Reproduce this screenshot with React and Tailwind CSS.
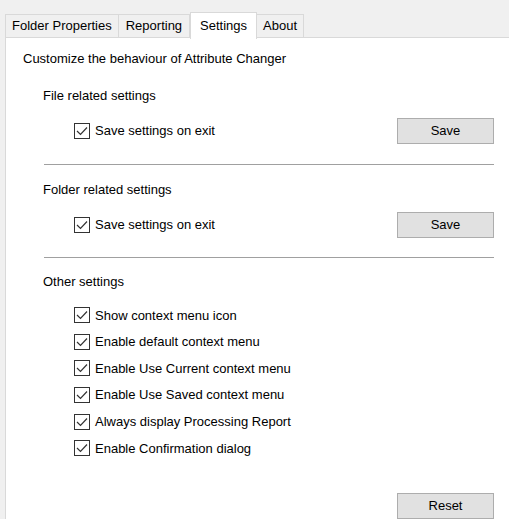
import { useState } from "react";

const tabs = ["Folder Properties", "Reporting", "Settings", "About"];

const otherOptions = [
  "Show context menu icon",
  "Enable default context menu",
  "Enable Use Current context menu",
  "Enable Use Saved context menu",
  "Always display Processing Report",
  "Enable Confirmation dialog",
];

function CheckBox({ label, checked, onToggle }) {
  return (
    <label className="flex items-center gap-[5px] cursor-default select-none">
      <span
        onClick={onToggle}
        className="w-[16px] h-[16px] border border-[#333333] bg-white flex items-center justify-center"
      >
        {checked && (
          <svg width="12" height="10" viewBox="0 0 12 10">
            <path d="M1 5 L4.5 8.5 L11 1.5" fill="none" stroke="#333333" strokeWidth="1.2" />
          </svg>
        )}
      </span>
      <span>{label}</span>
    </label>
  );
}

function WinButton({ children }) {
  return (
    <button
      type="button"
      className="w-[97px] h-[26px] bg-[#e1e1e1] border border-[#adadad] text-[13px] text-black"
    >
      {children}
    </button>
  );
}

export default function App() {
  const [active, setActive] = useState("Settings");
  const [fileSave, setFileSave] = useState(true);
  const [folderSave, setFolderSave] = useState(true);
  const [other, setOther] = useState(otherOptions.map(() => true));

  return (
    <div
      className="w-[509px] h-[519px] bg-[#f0f0f0] overflow-hidden flex flex-col text-[13px] text-black"
      style={{ fontFamily: '"Liberation Sans", Arial, sans-serif' }}
    >
      <div className="pt-[11px] pl-[5px] flex items-end h-[38px] relative z-10">
        {tabs.map((t) => (
          <button
            key={t}
            type="button"
            onClick={() => setActive(t)}
            className={
              t === active
                ? "h-[27px] px-[9px] bg-white border border-b-0 border-[#d9d9d9] -mb-px"
                : t === "Reporting"
                  ? "h-[23px] px-[7px] bg-[#f0f0f0] border border-b-0 border-[#d9d9d9] -ml-px mb-px"
                  : "h-[23px] px-[6px] bg-[#f0f0f0] border border-b-0 border-[#d9d9d9] -ml-px first:ml-0 mb-px"
            }
          >
            {t}
          </button>
        ))}
      </div>

      <div className="flex-1 ml-[5px] -mt-px bg-white border-l border-t border-[#d9d9d9] flex flex-col pl-[17px] pt-[13px]">
        <p className="leading-[15px]">Customize the behaviour of Attribute Changer</p>

        <p className="leading-[15px] mt-[22px] ml-[20px]">File related settings</p>
        <div className="flex items-center justify-between mt-[15px] ml-[51px] w-[420px]">
          <CheckBox label="Save settings on exit" checked={fileSave} onToggle={() => setFileSave(!fileSave)} />
          <WinButton>Save</WinButton>
        </div>
        <div className="mt-[20px] ml-[21px] w-[450px] border-t border-[#a0a0a0]" />

        <p className="leading-[15px] mt-[17px] ml-[20px]">Folder related settings</p>
        <div className="flex items-center justify-between mt-[15px] ml-[51px] w-[420px]">
          <CheckBox label="Save settings on exit" checked={folderSave} onToggle={() => setFolderSave(!folderSave)} />
          <WinButton>Save</WinButton>
        </div>
        <div className="mt-[19px] ml-[21px] w-[450px] border-t border-[#a0a0a0]" />

        <p className="leading-[15px] mt-[16px] ml-[20px]">Other settings</p>
        <div className="flex flex-col mt-[13px] ml-[51px]">
          {otherOptions.map((o, i) => (
            <div key={o} className="h-[26.6px] flex items-center">
              <CheckBox
                label={o}
                checked={other[i]}
                onToggle={() => setOther(other.map((v, j) => (j === i ? !v : v)))}
              />
            </div>
          ))}
        </div>

        <div className="flex justify-end w-[471px] mt-[31px]">
          <WinButton>Reset</WinButton>
        </div>
      </div>
    </div>
  );
}
